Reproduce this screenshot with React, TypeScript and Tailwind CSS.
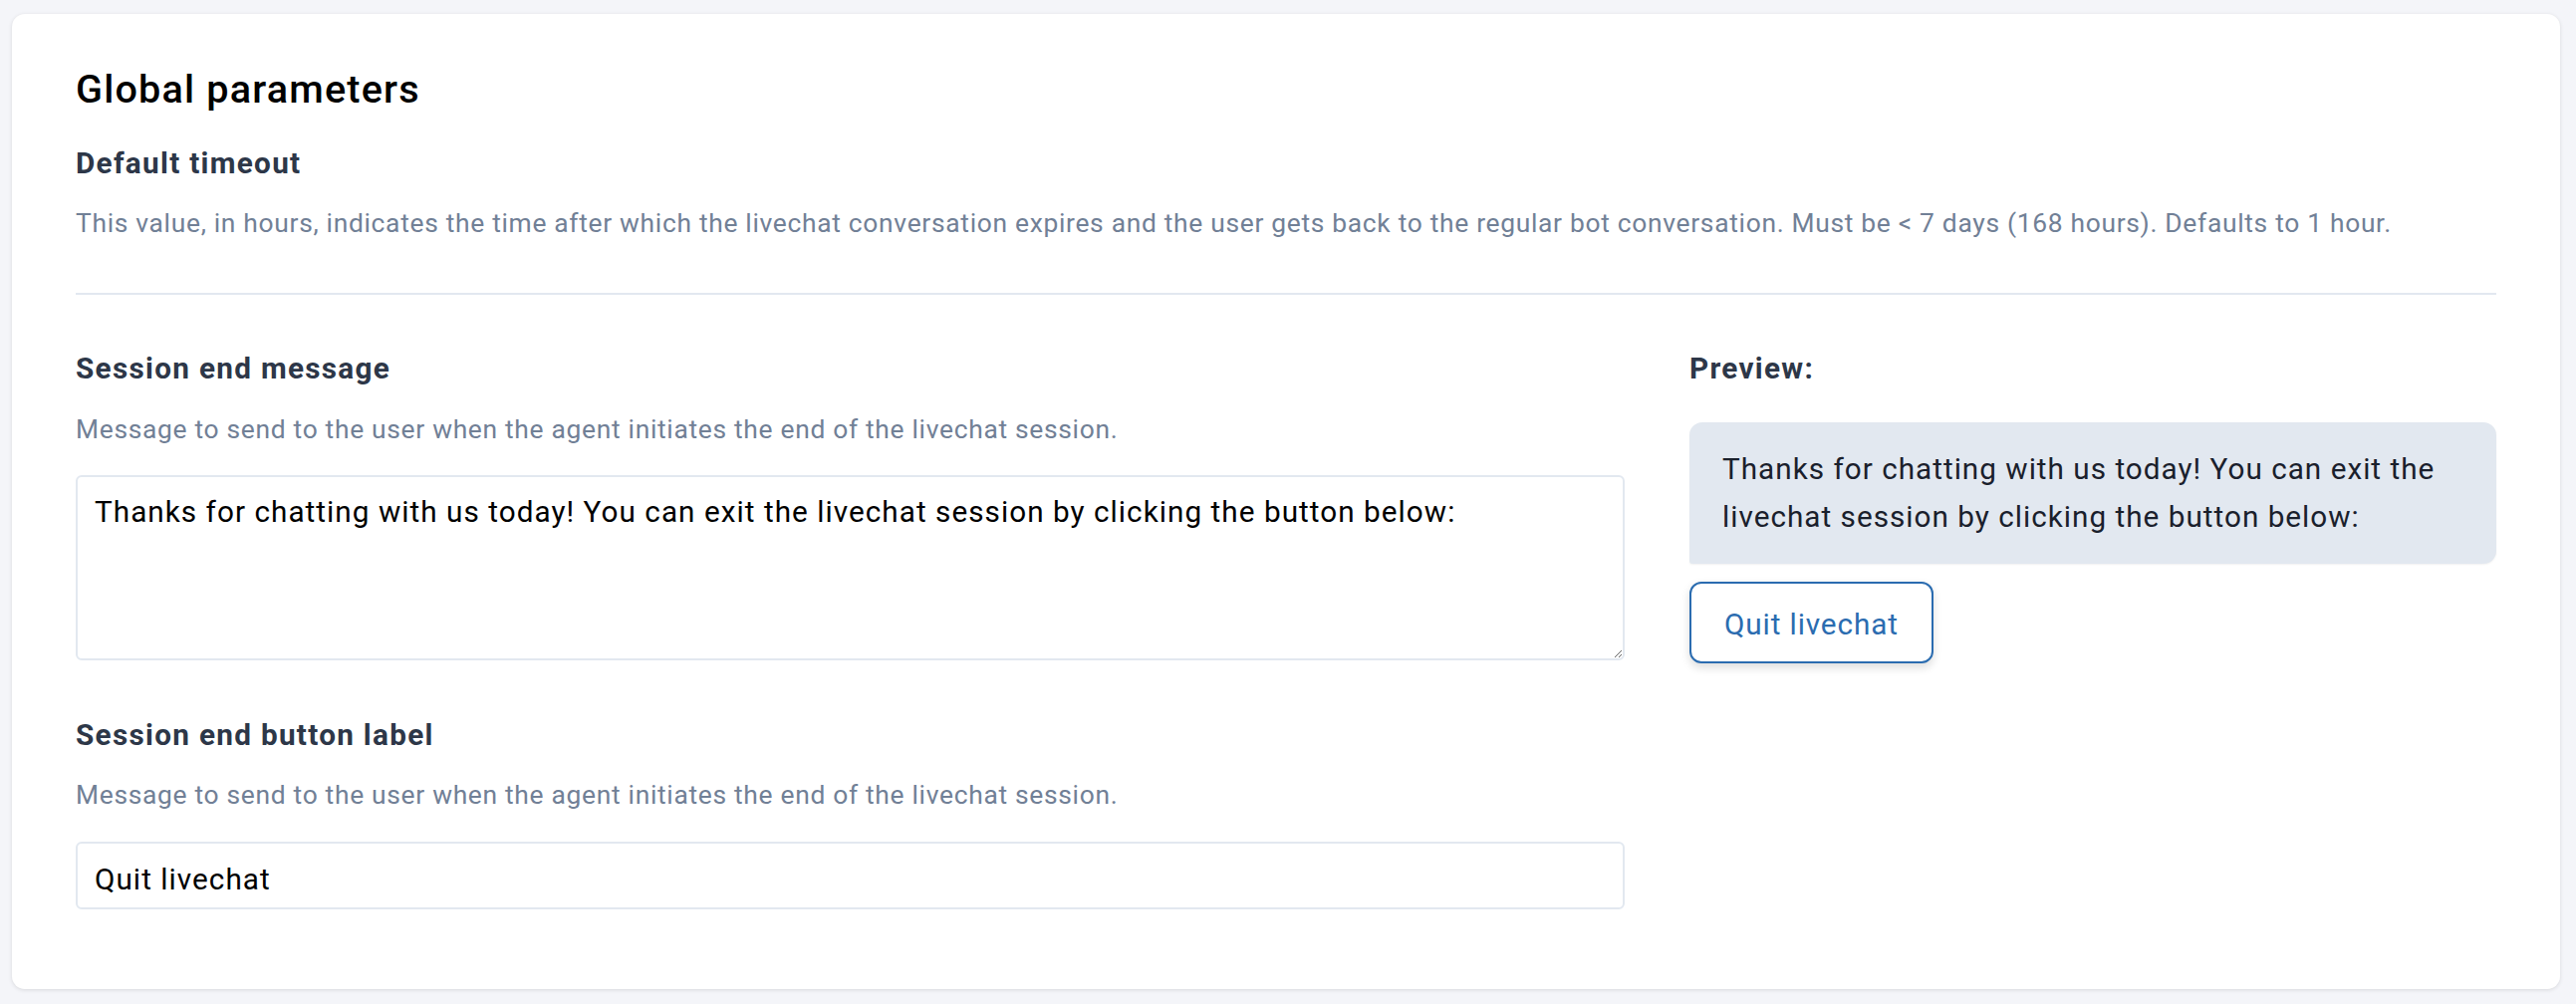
import { useState } from "react";

export default function App() {
  const [message, setMessage] = useState(
    "Thanks for chatting with us today! You can exit the livechat session by clicking the button below:"
  );
  const [label, setLabel] = useState("Quit livechat");

  return (
    <div
      className="min-h-[1008px] bg-[#f4f5f9] pl-[12px] pr-[16px] pt-[14px] pb-[15px]"
      style={{ fontFamily: "Roboto, 'Liberation Sans', sans-serif" }}
    >
      <div className="bg-white rounded-[13px] shadow-[0_1px_4px_rgba(0,0,0,0.12)] px-[64px] pt-[52px] pb-[80px]">
        {/* Global parameters */}
        <h1 className="text-[39.6px] leading-[1.2] font-medium tracking-[0.03em] text-black">Global parameters</h1>
        <h2 className="mt-[32px] text-[29.7px] leading-[1.2] font-bold tracking-[0.044em] text-[#2d3748]">
          Default timeout
        </h2>
        <p className="mt-[23.6px] text-[26.4px] leading-[1.5] tracking-[0.026em] text-[#718096]">
          This value, in hours, indicates the time after which the livechat conversation expires and the user gets
          back to the regular bot conversation. Must be &lt; 7 days (168 hours). Defaults to 1 hour.
        </p>
        <hr className="mt-[50px] border-0 border-t-2 border-[#e2e8f0]" />

        <div className="flex mt-[56px]">
          {/* Left: form fields */}
          <div className="w-2/3 pr-[65px]">
            <h2 className="text-[29.7px] leading-[1.2] font-bold tracking-[0.044em] text-[#2d3748]">
              Session end message
            </h2>
            <p className="mt-[23.6px] text-[26.4px] leading-[1.5] tracking-[0.026em] text-[#718096]">
              Message to send to the user when the agent initiates the end of the livechat session.
            </p>
            <textarea
              value={message}
              onChange={(e) => setMessage(e.target.value)}
              className="mt-[26px] block w-full h-[186px] border-2 border-[#e2e8f0] rounded-[6px] px-[17px] py-[13px] text-[29.7px] leading-[1.5] tracking-[0.035em] text-black outline-none"
            />

            <h2 className="mt-[57px] text-[29.7px] leading-[1.2] font-bold tracking-[0.044em] text-[#2d3748]">
              Session end button label
            </h2>
            <p className="mt-[23.6px] text-[26.4px] leading-[1.5] tracking-[0.026em] text-[#718096]">
              Message to send to the user when the agent initiates the end of the livechat session.
            </p>
            <input
              value={label}
              onChange={(e) => setLabel(e.target.value)}
              className="mt-[26px] block w-full h-[68px] border-2 border-[#e2e8f0] rounded-[6px] px-[17px] pt-[6px] text-[29.7px] tracking-[0.035em] text-black outline-none"
            />
          </div>

          {/* Right: preview */}
          <div className="w-1/3">
            <h2 className="text-[29.7px] leading-[1.2] font-bold tracking-[0.044em] text-[#2d3748]">Preview:</h2>
            <div className="mt-[36px] bg-[#e2e8f0] rounded-[13px] rounded-bl-[3px] px-[33px] py-[23px] text-[29.7px] leading-[48px] tracking-[0.034em] text-[#1a202c] shadow-[0_1px_2px_rgba(0,0,0,0.06)]">
              {message}
            </div>
            <button className="mt-[18px] h-[82px] px-[33px] pt-[4px] flex items-center border-2 border-[#2b6cb0] rounded-[12px] bg-white text-[29.7px] tracking-[0.03em] text-[#2b6cb0] shadow-[0_4px_10px_rgba(0,0,0,0.14)]">
              {label}
            </button>
          </div>
        </div>
      </div>
    </div>
  );
}
